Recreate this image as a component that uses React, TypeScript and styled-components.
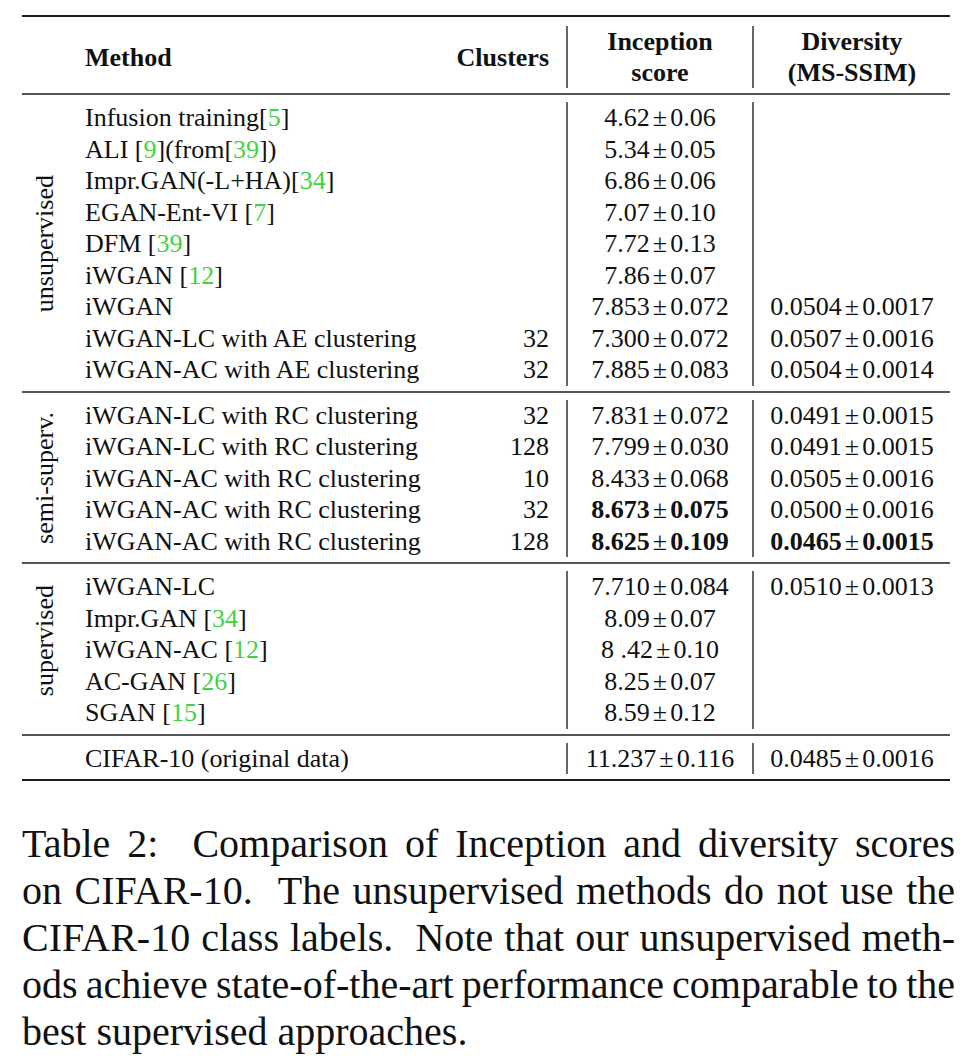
import React from "react";
import styled, { createGlobalStyle, css } from "styled-components";

const SERIF = '"Liberation Serif", "Times New Roman", Tinos, serif';

const serifFont = css`
  font-family: ${SERIF};
`;

const GlobalStyle = createGlobalStyle`
  html, body {
    margin: 0;
    padding: 0;
    background: #ffffff;
  }
`;

const Page = styled.div`
  ${serifFont};
  width: 966px;
  padding: 15px 0 0 22px;
  box-sizing: border-box;
  color: #111;
`;

const TableBox = styled.div`
  width: 928px;
  font-size: 26px;
`;

const Rule = styled.div<{ $thick?: boolean; $gapTop?: number; $gapBottom?: number }>`
  height: 2px;
  background: ${(p) => (p.$thick ? "#1c1c1c" : "#555")};
  margin-top: ${(p) => p.$gapTop ?? 0}px;
  margin-bottom: ${(p) => p.$gapBottom ?? 0}px;
`;

const gridCols = css`
  display: grid;
  grid-template-columns: 355px 126px 186px 198px;
`;

const HeaderRow = styled.div`
  display: flex;
  height: 62px;
`;

const LabelSpacer = styled.div`
  width: 63px;
  flex: none;
`;

const HeaderGrid = styled.div`
  ${gridCols};
  flex: 1;
`;

const HeadCell = styled.div<{ $align: "left" | "right" | "center"; $bar?: boolean }>`
  display: flex;
  flex-direction: column;
  justify-content: center;
  align-items: ${(p) =>
    p.$align === "left" ? "flex-start" : p.$align === "right" ? "flex-end" : "center"};
  font-weight: bold;
  line-height: 31px;
  padding-right: ${(p) => (p.$align === "right" ? "17px" : "0")};
  border-left: ${(p) => (p.$bar ? "2px solid #666" : "none")};
`;

const Section = styled.div`
  display: flex;
`;

const GroupLabel = styled.div<{ $raise?: number }>`
  width: 63px;
  flex: none;
  display: flex;
  align-items: center;
  justify-content: center;
  padding-right: 18px;
  padding-bottom: ${(p) => p.$raise ?? 0}px;
  box-sizing: border-box;
`;

const VerticalText = styled.span`
  writing-mode: vertical-rl;
  transform: rotate(180deg);
  line-height: 26px;
  white-space: nowrap;
`;

const Rows = styled.div`
  flex: 1;
  display: flex;
  flex-direction: column;
`;

const Row = styled.div`
  ${gridCols};
  line-height: 31.5px;
  height: 31.5px;
`;

const FullRow = styled.div`
  display: flex;
  line-height: 31.5px;
  height: 31.5px;
`;

const MethodCell = styled.div`
  white-space: nowrap;
`;

const ClusterCell = styled.div`
  text-align: right;
  padding-right: 17px;
`;

const ScoreCell = styled.div`
  text-align: center;
  border-left: 2px solid #666;
  white-space: nowrap;
`;

const Ref = styled.span`
  color: #3fd43f;
`;

const Num = styled.span<{ $bold?: boolean }>`
  font-weight: ${(p) => (p.$bold ? "bold" : "normal")};
`;

const Pm = styled.span`
  margin: 0 3px;
`;

const Caption = styled.div`
  width: 933px;
  margin-top: 39px;
  font-size: 40px;
  line-height: 47px;
  color: #111;
`;

const CaptionLine = styled.div<{ $last?: boolean }>`
  text-align: ${(p) => (p.$last ? "left" : "justify")};
  text-align-last: ${(p) => (p.$last ? "left" : "justify")};
  white-space: ${(p) => (p.$last ? "normal" : "nowrap")};
  word-spacing: ${(p) => (p.$last ? "0" : "-3px")};
`;

type Entry = {
  method: string;
  clusters?: string;
  inception?: string;
  inceptionBold?: boolean;
  diversity?: string;
  diversityBold?: boolean;
};

const unsupervised: Entry[] = [
  { method: "Infusion training[5]", inception: "4.62±0.06" },
  { method: "ALI [9](from[39])", inception: "5.34±0.05" },
  { method: "Impr.GAN(-L+HA)[34]", inception: "6.86±0.06" },
  { method: "EGAN-Ent-VI [7]", inception: "7.07±0.10" },
  { method: "DFM [39]", inception: "7.72±0.13" },
  { method: "iWGAN [12]", inception: "7.86±0.07" },
  { method: "iWGAN", inception: "7.853±0.072", diversity: "0.0504±0.0017" },
  { method: "iWGAN-LC with AE clustering", clusters: "32", inception: "7.300±0.072", diversity: "0.0507±0.0016" },
  { method: "iWGAN-AC with AE clustering", clusters: "32", inception: "7.885±0.083", diversity: "0.0504±0.0014" },
];

const semi: Entry[] = [
  { method: "iWGAN-LC with RC clustering", clusters: "32", inception: "7.831±0.072", diversity: "0.0491±0.0015" },
  { method: "iWGAN-LC with RC clustering", clusters: "128", inception: "7.799±0.030", diversity: "0.0491±0.0015" },
  { method: "iWGAN-AC with RC clustering", clusters: "10", inception: "8.433±0.068", diversity: "0.0505±0.0016" },
  { method: "iWGAN-AC with RC clustering", clusters: "32", inception: "8.673±0.075", inceptionBold: true, diversity: "0.0500±0.0016" },
  { method: "iWGAN-AC with RC clustering", clusters: "128", inception: "8.625±0.109", inceptionBold: true, diversity: "0.0465±0.0015", diversityBold: true },
];

const supervised: Entry[] = [
  { method: "iWGAN-LC", inception: "7.710±0.084", diversity: "0.0510±0.0013" },
  { method: "Impr.GAN [34]", inception: "8.09±0.07" },
  { method: "iWGAN-AC [12]", inception: "8 .42±0.10" },
  { method: "AC-GAN [26]", inception: "8.25±0.07" },
  { method: "SGAN [15]", inception: "8.59±0.12" },
];

const groups: { label: string; rows: Entry[]; raise: number }[] = [
  { label: "unsupervised", rows: unsupervised, raise: 0 },
  { label: "semi-superv.", rows: semi, raise: 0 },
  { label: "supervised", rows: supervised, raise: 18 },
];

const MethodText: React.FC<{ text: string }> = ({ text }) => {
  const parts = text.split(/(\[\d+\])/);
  return (
    <>
      {parts.map((part, i) => {
        const m = part.match(/^\[(\d+)\]$/);
        if (m) {
          return (
            <React.Fragment key={i}>
              [<Ref>{m[1]}</Ref>]
            </React.Fragment>
          );
        }
        return <React.Fragment key={i}>{part}</React.Fragment>;
      })}
    </>
  );
};

const Score: React.FC<{ value?: string; bold?: boolean }> = ({ value, bold }) => {
  if (!value) return null;
  const [a, b] = value.split("±");
  return (
    <>
      <Num $bold={bold}>{a}</Num>
      <Pm>±</Pm>
      <Num $bold={bold}>{b}</Num>
    </>
  );
};

const DataRow: React.FC<{ e: Entry }> = ({ e }) => (
  <Row>
    <MethodCell>
      <MethodText text={e.method} />
    </MethodCell>
    <ClusterCell>{e.clusters ?? ""}</ClusterCell>
    <ScoreCell>
      <Score value={e.inception} bold={e.inceptionBold} />
    </ScoreCell>
    <ScoreCell>
      <Score value={e.diversity} bold={e.diversityBold} />
    </ScoreCell>
  </Row>
);

const captionLines = [
  "Table 2:\u00a0\u00a0Comparison of Inception and diversity scores",
  "on CIFAR-10.\u00a0\u00a0The unsupervised methods do not use the",
  "CIFAR-10 class labels.\u00a0\u00a0Note that our unsupervised meth-",
  "ods achieve state-of-the-art performance comparable to the",
  "best supervised approaches.",
];

export default function App() {
  return (
    <>
      <GlobalStyle />
      <Page>
        <TableBox>
          <Rule $thick $gapBottom={9} />
          <HeaderRow>
            <LabelSpacer />
            <HeaderGrid>
              <HeadCell $align="left">Method</HeadCell>
              <HeadCell $align="right">Clusters</HeadCell>
              <HeadCell $align="center" $bar>
                <span>Inception</span>
                <span>score</span>
              </HeadCell>
              <HeadCell $align="center" $bar>
                <span>Diversity</span>
                <span>(MS-SSIM)</span>
              </HeadCell>
            </HeaderGrid>
          </HeaderRow>
          <Rule $gapTop={5} $gapBottom={7} />
          {groups.map((g) => (
            <React.Fragment key={g.label}>
              <Section>
                <GroupLabel $raise={g.raise}>
                  <VerticalText>{g.label}</VerticalText>
                </GroupLabel>
                <Rows>
                  {g.rows.map((e, i) => (
                    <DataRow key={i} e={e} />
                  ))}
                </Rows>
              </Section>
              <Rule $gapTop={5} $gapBottom={7} />
            </React.Fragment>
          ))}
          <FullRow>
            <LabelSpacer />
            <Rows>
              <DataRow
                e={{
                  method: "CIFAR-10 (original data)",
                  inception: "11.237±0.116",
                  diversity: "0.0485±0.0016",
                }}
              />
            </Rows>
          </FullRow>
          <Rule $thick $gapTop={5} />
        </TableBox>
        <Caption>
          {captionLines.map((l, i) => (
            <CaptionLine key={i} $last={i === captionLines.length - 1}>
              {l}
            </CaptionLine>
          ))}
        </Caption>
      </Page>
    </>
  );
}
